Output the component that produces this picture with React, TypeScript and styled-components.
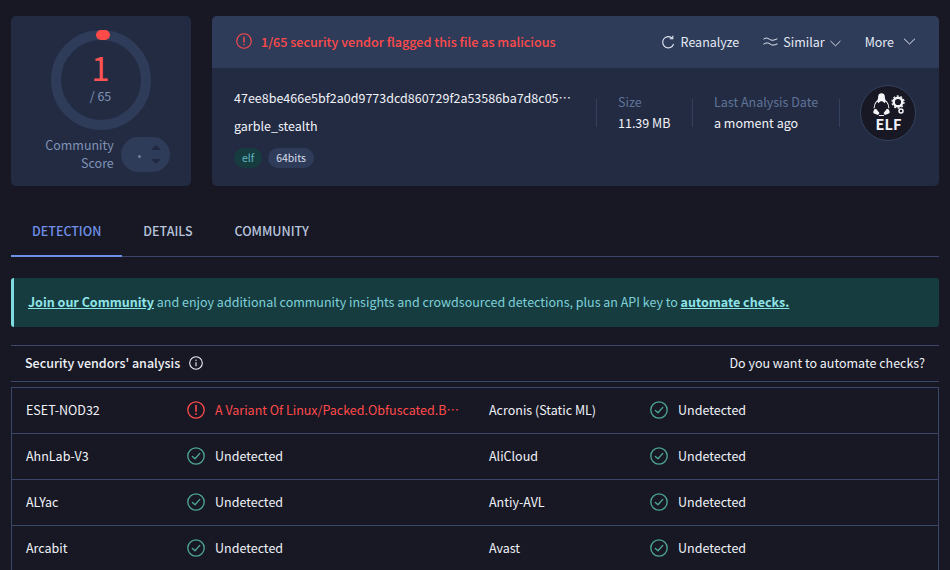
import React from "react";
import styled, { createGlobalStyle } from "styled-components";

const FONT = `"Noto Sans CJK SC", "Noto Sans", sans-serif`;

const Global = createGlobalStyle`
  html, body { margin: 0; padding: 0; height: 570px; overflow: hidden; background: #171824; }
  body { font-family: ${FONT}; font-size: 12.5px; color: #f0f2f8; }
  * { box-sizing: border-box; }
`;

const Page = styled.div`
  padding: 16px 11px 0;
  width: 950px;
  height: 570px;
  overflow: hidden;
`;
const Top = styled.div`
  display: flex;
  gap: 21px;
  height: 170px;
`;
const ScoreCard = styled.section`
  width: 180px;
  background: #232b42;
  border-radius: 5px;
  display: flex;
  flex-direction: column;
  align-items: center;
  padding-top: 14px;
`;
const Gauge = styled.div`
  position: relative;
  width: 100px;
  height: 100px;
  border: 10px solid #2e3c5a;
  border-radius: 50%;
  display: flex;
  flex-direction: column;
  align-items: center;
  margin-left: -1px;
`;
const GaugeDot = styled.span`
  position: absolute;
  top: -10px;
  left: 35px;
  width: 14px;
  height: 10px;
  border-radius: 5px;
  background: #ff4a4a;
`;
const ScoreNum = styled.div`
  font-size: 33px;
  line-height: 34px;
  color: #ff5252;
  margin-top: 10px;
`;
const ScoreTotal = styled.div`
  font-size: 12.5px;
  line-height: 16px;
  color: #7f93b8;
  margin-top: 4px;
`;
const CommunityRow = styled.div`
  display: flex;
  align-items: center;
  gap: 7px;
  margin-top: 7px;
  padding-left: 13px;
`;
const CommunityLabel = styled.div`
  font-size: 12.5px;
  line-height: 18px;
  color: #7f93b8;
  text-align: right;
  margin-top: -1px;
`;
const Stepper = styled.div`
  position: relative;
  width: 49px;
  height: 35px;
  border-radius: 18px;
  background: #2e3c5a;
`;
const StepDot = styled.span`
  position: absolute;
  left: 17px;
  top: 18px;
  width: 3px;
  height: 3px;
  border-radius: 50%;
  background: #6d7f9f;
`;
const StepArrow = styled.span<{ $down?: boolean }>`
  position: absolute;
  left: 30px;
  top: ${(p) => (p.$down ? "22px" : "8px")};
  width: 0;
  height: 0;
  border-left: 5px solid transparent;
  border-right: 5px solid transparent;
  ${(p) => (p.$down ? "border-top: 5px solid #1f2840;" : "border-bottom: 5px solid #1f2840;")}
`;
const MainCard = styled.section`
  flex: 1;
  background: #232b42;
  border-radius: 5px;
  overflow: hidden;
`;
const CardHead = styled.header`
  height: 52px;
  background: #2e3c5a;
  display: flex;
  align-items: center;
  padding: 0 23px 2px 24px;
`;
const Alert = styled.div`
  display: flex;
  align-items: center;
  gap: 9px;
  color: #ff4a4a;
  font-weight: 500;
  font-size: 12.6px;
  flex: 1;
`;
const Action = styled.button<{ $gap?: number }>`
  background: none;
  border: 0;
  padding: 0;
  display: flex;
  align-items: center;
  gap: ${(p) => p.$gap ?? 6}px;
  font: 400 12.5px ${FONT};
  color: #e4e9f4;
`;
const Actions = styled.div`
  display: flex;
  align-items: center;
  gap: 24px;
  margin-top: 1px;
`;
const CardBody = styled.div`
  display: flex;
`;
const FileInfo = styled.div`
  width: 384px;
  padding: 21px 0 0 22px;
`;
const Hash = styled.div`
  font-size: 12.5px;
  line-height: 18px;
  width: 342px;
  overflow: hidden;
  white-space: nowrap;
  text-overflow: ellipsis;
`;
const FileName = styled.div`
  font-size: 12.5px;
  line-height: 18px;
  margin-top: 10px;
`;
const Tags = styled.div`
  display: flex;
  gap: 6px;
  margin-top: 13px;
`;
const Tag = styled.span<{ $green?: boolean }>`
  height: 20px;
  line-height: 20px;
  padding: 0 8px;
  border-radius: 10px;
  font-size: 10.5px;
  background: ${(p) => (p.$green ? "#163c40" : "#2e3c5a")};
  color: ${(p) => (p.$green ? "#62b8c0" : "#d8deea")};
`;
const Divider = styled.span`
  flex: none;
  width: 1px;
  height: 28px;
  margin-top: 31px;
  background: #33415f;
`;
const MetaStack = styled.div<{ $w: number }>`
  width: ${(p) => p.$w}px;
  padding: 26px 0 0 21px;
`;
const MetaLabel = styled.div`
  font-size: 12.5px;
  line-height: 16px;
  color: #5f7499;
`;
const MetaValue = styled.div`
  font-size: 12.5px;
  line-height: 18px;
  margin-top: 4px;
  white-space: nowrap;
`;
const ElfBadge = styled.div`
  width: 56px;
  height: 56px;
  margin: 17px 0 0 20px;
  border-radius: 50%;
  background: #171824;
  border: 1px solid #33415f;
  display: flex;
  flex-direction: column;
  align-items: center;
  padding: 7px 0 0 1px;
`;
const ElfText = styled.span`
  font-size: 14.5px;
  line-height: 13px;
  font-weight: 700;
  color: #f0f2f8;
`;
const Tabs = styled.nav`
  display: flex;
  height: 57px;
  margin-top: 14px;
  border-bottom: 1px solid #3a4668;
  margin-bottom: 21px;
`;
const Tab = styled.div<{ $active?: boolean }>`
  padding: 0 21px;
  font-size: 12.5px;
  font-weight: 500;
  line-height: 61px;
  height: 57px;
  color: ${(p) => (p.$active ? "#6f90e8" : "#b8c4dc")};
  border-bottom: ${(p) => (p.$active ? "2px solid #6f90e8" : "0")};
`;
const Banner = styled.div`
  height: 49px;
  background: #163c40;
  border-left: 3px solid #7fdce0;
  border-radius: 3px;
  display: flex;
  align-items: center;
  padding: 0 0 2px 14px;
  color: #7fd0d8;
  font-size: 12.5px;
  white-space: pre;
`;
const BannerLink = styled.a`
  font-weight: 700;
  color: #8fe4e8;
  text-decoration: underline;
`;
const VendorsHead = styled.div`
  margin-top: 18px;
  height: 37px;
  border-top: 1px solid #3a4668;
  border-bottom: 1px solid #3a4668;
  display: flex;
  align-items: center;
  justify-content: space-between;
  padding: 0 14px 2px;
`;
const VendorsTitle = styled.div`
  display: flex;
  align-items: center;
  gap: 9px;
  font-weight: 500;
  font-size: 12.5px;
`;
const AutomateText = styled.div`
  font-size: 12.5px;
  margin-left: -1px;
`;
const Table = styled.div`
  margin-top: 5px;
  border: 1px solid #3a4668;
  border-bottom: 0;
  display: grid;
  grid-template-columns: 1fr 1fr;
`;
const Cell = styled.div`
  height: 46px;
  border-bottom: 1px solid #3a4668;
  display: flex;
  align-items: center;
  min-width: 0;
  padding-bottom: 1px;
`;
const Vendor = styled.div`
  width: 175px;
  padding: 0 0 1px 14px;
  font-size: 12.5px;
  flex: none;
`;
const Verdict = styled.div<{ $bad?: boolean }>`
  display: flex;
  align-items: center;
  gap: 10px;
  font-size: 12.5px;
  min-width: 0;
  color: ${(p) => (p.$bad ? "#ff4a4a" : "#f0f2f8")};
`;
const VerdictText = styled.span`
  width: 247px;
  padding-bottom: 1px;
  overflow: hidden;
  white-space: nowrap;
  text-overflow: ellipsis;
`;
const Glyph = styled.svg`
  flex: none;
  display: block;
`;
const ChevronGlyph = styled(Glyph)<{ $low?: boolean }>`
  margin-top: ${(p) => (p.$low ? "3px" : "-1px")};
`;

const WarnIcon = ({ size = 18 }: { size?: number }) => (
  <Glyph width={size} height={size} viewBox="0 0 18 18" fill="none" stroke="#ff4a4a" strokeWidth="1.3">
    <circle cx="9" cy="9" r="8.2" />
    <path d="M9 4.6v5.6" strokeWidth="1.6" strokeLinecap="round" />
    <circle cx="9" cy="13" r="0.9" fill="#ff4a4a" stroke="none" />
  </Glyph>
);
const OkIcon = () => (
  <Glyph width="18" height="18" viewBox="0 0 18 18" fill="none" stroke="#4fa898" strokeWidth="1.3">
    <circle cx="9" cy="9" r="8.2" />
    <path d="M5.4 9.4 8 11.8l4.8-5.4" strokeLinecap="round" strokeLinejoin="round" />
  </Glyph>
);
const InfoIcon = () => (
  <Glyph width="14" height="14" viewBox="0 0 14 14" fill="none" stroke="#f0f2f8" strokeWidth="1.1">
    <circle cx="7" cy="7" r="6.3" />
    <path d="M7 6.2v4" />
    <circle cx="7" cy="4.2" r="0.7" fill="#f0f2f8" stroke="none" />
  </Glyph>
);
const ReloadIcon = () => (
  <Glyph width="14" height="14" viewBox="0 0 14 14" fill="none" stroke="#e4e9f4" strokeWidth="1.1">
    <path d="M11.4 3.4A5.6 5.6 0 1 0 12.6 9" />
    <path d="M11.8 0.8v3h-3" />
  </Glyph>
);
const WavesIcon = () => (
  <Glyph width="15" height="10" viewBox="0 0 15 10" fill="none" stroke="#e4e9f4" strokeWidth="1">
    <path d="M0.5 2.2c2-1.6 3.8-1.4 5.8 0s4 1.6 8-.4" />
    <path d="M0.5 7.2c3-1.8 5-1.6 6.6-.2s4 1.6 7.4-.2" />
  </Glyph>
);
const Chevron = ({ low, width = 12 }: { low?: boolean; width?: number }) => (
  <ChevronGlyph $low={low} width={width} height="7" viewBox="0 0 12 7" fill="none" stroke="#e4e9f4" strokeWidth="1">
    <path d="M0.6 0.8 6 6l5.4-5.2" />
  </ChevronGlyph>
);
const ElfArt = () => (
  <Glyph width="32" height="24" viewBox="0 0 32 24" fill="none">
    <path d="M8.5 0.3c2.2 0 3.4 1.7 3.4 3.7 0 1.7.4 2.700 1.300 4l-1.700 2.200c-1-1.400-2-2-3-2s-2 .6-3 2L3.800 8c.9-1.300 1.300-2.300 1.300-4 0-2 1.200-3.700 3.400-3.700z" fill="#f4f5f8" />
    <path d="M13.200 8c1.600 2 2.700 4.500 2.700 7.200M3.800 8C2.200 10 1.100 12.500 1.100 15.200" stroke="#f4f5f8" strokeWidth="1.100" />
    <path d="M1.100 16.500.4 18.600c-.5.800-.1 1.500.8 1.900l3 1.300c.9.300 1.500-.3 1.900-1.100.4-.8 0-1.500-.7-2l-2.300-2.900z" fill="#f4f5f8" />
    <path d="M15.900 16.500l.7 2.100c.5.800.1 1.500-.8 1.900l-3 1.300c-.9.300-1.500-.3-1.900-1.100-.4-.8 0-1.500.7-2l2.300-2.900z" fill="#f4f5f8" />
    <path d="M6 22.500h5" stroke="#f4f5f8" strokeWidth="1" />
    <circle cx="25" cy="9" r="4.300" stroke="#f4f5f8" strokeWidth="2.400" />
    <circle cx="25" cy="9" r="6" stroke="#f4f5f8" strokeWidth="1.300" strokeDasharray="2 1.750" />
    <circle cx="28" cy="18" r="2" stroke="#f4f5f8" strokeWidth="1.500" />
  </Glyph>
);

const rows: [string, string, boolean, string, string][] = [
  ["ESET-NOD32", "A Variant Of Linux/Packed.Obfuscated.BW Trojan", true, "Acronis (Static ML)", "Undetected"],
  ["AhnLab-V3", "Undetected", false, "AliCloud", "Undetected"],
  ["ALYac", "Undetected", false, "Antiy-AVL", "Undetected"],
  ["Arcabit", "Undetected", false, "Avast", "Undetected"],
];

export default function App() {
  return (
    <Page>
      <Global />
      <Top>
        <ScoreCard>
          <Gauge>
            <GaugeDot />
            <ScoreNum>1</ScoreNum>
            <ScoreTotal>/ 65</ScoreTotal>
          </Gauge>
          <CommunityRow>
            <CommunityLabel>
              Community
              <br />
              Score
            </CommunityLabel>
            <Stepper>
              <StepDot />
              <StepArrow />
              <StepArrow $down />
            </Stepper>
          </CommunityRow>
        </ScoreCard>
        <MainCard>
          <CardHead>
            <Alert>
              <WarnIcon size={16} />
              1/65 security vendor flagged this file as malicious
            </Alert>
            <Actions>
              <Action $gap={6}>
                <ReloadIcon />
                Reanalyze
              </Action>
              <Action $gap={5}>
                <WavesIcon />
                Similar
                <Chevron low width={11} />
              </Action>
              <Action $gap={9}>
                More
                <Chevron width={13} />
              </Action>
            </Actions>
          </CardHead>
          <CardBody>
            <FileInfo>
              <Hash>47ee8be466e5bf2a0d9773dcd860729f2a53586ba7d8c05e1f6a0c2b7e91d34a</Hash>
              <FileName>garble_stealth</FileName>
              <Tags>
                <Tag $green>elf</Tag>
                <Tag>64bits</Tag>
              </Tags>
            </FileInfo>
            <Divider />
            <MetaStack $w={95}>
              <MetaLabel>Size</MetaLabel>
              <MetaValue>11.39 MB</MetaValue>
            </MetaStack>
            <Divider />
            <MetaStack $w={146}>
              <MetaLabel>Last Analysis Date</MetaLabel>
              <MetaValue>a moment ago</MetaValue>
            </MetaStack>
            <Divider />
            <ElfBadge>
              <ElfArt />
              <ElfText>ELF</ElfText>
            </ElfBadge>
          </CardBody>
        </MainCard>
      </Top>
      <Tabs>
        <Tab $active>DETECTION</Tab>
        <Tab>DETAILS</Tab>
        <Tab>COMMUNITY</Tab>
      </Tabs>
      <Banner>
        <BannerLink>Join our Community</BannerLink>
        {" and enjoy additional community insights and crowdsourced detections, plus an API key to "}
        <BannerLink>automate checks.</BannerLink>
      </Banner>
      <VendorsHead>
        <VendorsTitle>
          Security vendors' analysis
          <InfoIcon />
        </VendorsTitle>
        <AutomateText>Do you want to automate checks?</AutomateText>
      </VendorsHead>
      <Table>
        {rows.map(([a, av, bad, b, bv]) => (
          <React.Fragment key={a}>
            <Cell>
              <Vendor>{a}</Vendor>
              <Verdict $bad={bad}>
                {bad ? <WarnIcon /> : <OkIcon />}
                <VerdictText>{av}</VerdictText>
              </Verdict>
            </Cell>
            <Cell>
              <Vendor>{b}</Vendor>
              <Verdict>
                <OkIcon />
                <VerdictText>{bv}</VerdictText>
              </Verdict>
            </Cell>
          </React.Fragment>
        ))}
      </Table>
    </Page>
  );
}
